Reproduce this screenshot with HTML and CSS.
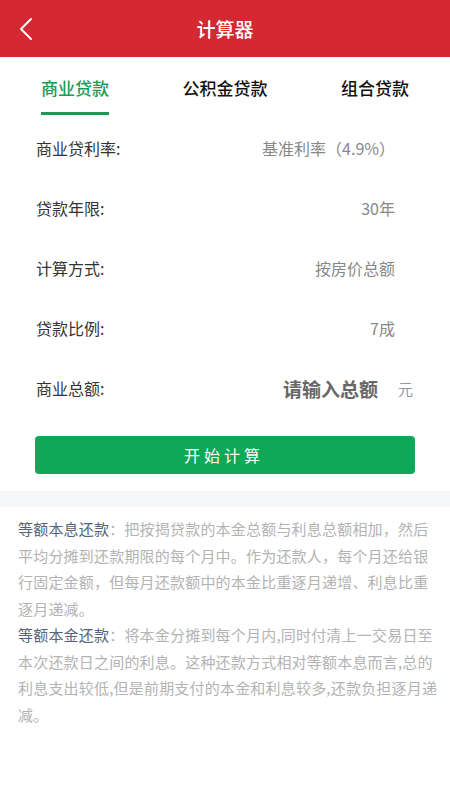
FILE: index.html
```html
<!DOCTYPE html>
<html lang="zh-CN">
<head>
  <meta charset="UTF-8" />
  <meta name="viewport" content="width=device-width, initial-scale=1.0"/>
  <title>计算器</title>
  <link rel="stylesheet" href="styles.css">
</head>
<body>
<header class="topbar">
  <a class="back" href="#">
    <svg width="16" height="24" viewBox="0 0 16 24"><path d="M13 2 L3 12 L13 22" fill="none" stroke="#fff" stroke-width="2" stroke-linecap="round" stroke-linejoin="round"/></svg>
  </a>
  <h1>计算器</h1>
  <span></span>
</header>

<nav class="tabs">
  <div class="tab active"><span>商业贷款</span></div>
  <div class="tab"><span>公积金贷款</span></div>
  <div class="tab"><span>组合贷款</span></div>
</nav>

<section class="form">
  <div class="row"><span class="label">商业贷利率:</span><span class="value">基准利率（4.9%）</span></div>
  <div class="row"><span class="label">贷款年限:</span><span class="value">30年</span></div>
  <div class="row"><span class="label">计算方式:</span><span class="value">按房价总额</span></div>
  <div class="row"><span class="label">贷款比例:</span><span class="value">7成</span></div>
  <div class="row"><span class="label">商业总额:</span><span class="amount">请输入总额</span><span class="unit">元</span></div>
  <button class="calc-btn">开始计算</button>
</section>

<div class="gap"></div>

<section class="notes">
  <p><b>等额本息还款</b>：把按揭贷款的本金总额与利息总额相加，然后<br>平均分摊到还款期限的每个月中。作为还款人，每个月还给银<br>行固定金额，但每月还款额中的本金比重逐月递增、利息比重<br>逐月递减。</p>
  <p><b>等额本金还款</b>：将本金分摊到每个月内,同时付清上一交易日至<br>本次还款日之间的利息。这种还款方式相对等额本息而言,总的<br>利息支出较低,但是前期支付的本金和利息较多,还款负担逐月递<br>减。</p>
</section>
</body>
</html>
```

FILE: styles.css
```css
body {
  margin: 0;
  font-family: "Noto Sans CJK SC", "Noto Sans", sans-serif;
  background: #fff;
  color: #333;
}

.topbar {
  display: grid;
  grid-template-columns: 60px 1fr 60px;
  align-items: center;
  height: 57px;
  background: #d42833;
  color: #fff;
}

.back {
  display: flex;
  align-items: center;
  padding-left: 18px;
  height: 57px;
}

.topbar h1 {
  margin: 0;
  text-align: center;
  font-size: 19px;
  font-weight: 500;
  line-height: 57px;
}

.tabs {
  display: grid;
  grid-template-columns: 1fr 1fr 1fr;
  height: 61px;
}

.tab {
  display: flex;
  justify-content: center;
  padding-top: 19px;
}

.tab span {
  display: inline-block;
  font-size: 17px;
  line-height: 24px;
  font-weight: 500;
  color: #111;
  height: 39px;
  box-sizing: border-box;
}

.tab.active span {
  color: #1c9a55;
  border-bottom: 3px solid #1c9a55;
}

.form {
  padding-bottom: 15px;
}

.row {
  display: flex;
  align-items: center;
  height: 60px;
  padding: 0 37px 0 36px;
}

.label {
  flex: 1;
  font-size: 16px;
  color: #333;
}

.value {
  font-size: 16px;
  color: #888;
  padding-right: 18px;
}

.amount {
  font-size: 19px;
  font-weight: 700;
  color: #666;
}

.unit {
  margin-left: 20px;
  font-size: 15px;
  color: #999;
}

.calc-btn {
  display: block;
  box-sizing: border-box;
  width: 380px;
  height: 38px;
  margin: 18px 0 0 35px;
  border: none;
  border-radius: 4px;
  background: #0fa858;
  color: #fff;
  font-family: inherit;
  font-size: 16px;
  letter-spacing: 4px;
  padding-left: 4px;
}

.gap {
  height: 16px;
  margin-top: 2px;
  background: #f5f6f8;
}

.notes {
  padding: 9px 12px 0 18px;
}

.notes p {
  margin: 0;
  font-size: 15px;
  line-height: 26.5px;
  letter-spacing: 0.2px;
  color: #b3b3b3;
}

.notes b {
  font-weight: 400;
  color: #56647a;
}
```
